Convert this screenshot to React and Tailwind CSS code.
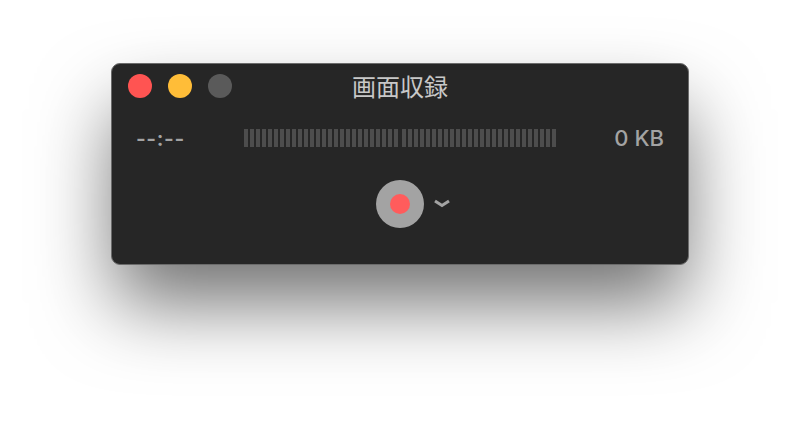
import React from 'react';

const bars = Array.from({ length: 26 });

function MeterGroup() {
  return (
    <div className="flex gap-[2px]">
      {bars.map((_, i) => (
        <div key={i} className="w-[4px] h-[18px] bg-[#4d4d4d]" />
      ))}
    </div>
  );
}

export default function App() {
  return (
    <div className="w-[800px] h-[424px] overflow-hidden bg-white flex justify-center pt-[63px] font-['Inter',sans-serif]">
      <div className="w-[578px] h-[202px] rounded-[9px] bg-[#262626] border border-[#6b6b6b] shadow-[0_42px_78px_-4px_rgba(0,0,0,0.56)] flex flex-col">
        <div className="relative flex items-center justify-center h-[44px] shrink-0">
          <div className="absolute left-[16px] top-[10px] flex gap-[16px]">
            <div className="w-[24px] h-[24px] rounded-full bg-[#ff5452]" />
            <div className="w-[24px] h-[24px] rounded-full bg-[#ffbd38]" />
            <div className="w-[24px] h-[24px] rounded-full bg-[#5a5a5a]" />
          </div>
          <span className="text-[24px] leading-none text-[#c8c8c8] font-['Noto_Sans_CJK_JP',sans-serif]">画面収録</span>
        </div>

        <div className="flex items-center h-[18px] mt-[21px] pl-[24px] pr-[24px]">
          <span className="w-[108px] text-[21px] leading-none font-semibold tracking-[0.6px] text-[#a3a3a3]">--:--</span>
          <div className="flex gap-[4px]">
            <MeterGroup />
            <MeterGroup />
          </div>
          <span className="ml-auto text-[22px] leading-none font-medium text-[#a3a3a3]">0 KB</span>
        </div>

        <div className="relative flex justify-center mt-[33px]">
          <div className="w-[48px] h-[48px] rounded-full bg-[#a3a3a3] flex items-center justify-center">
            <div className="w-[20px] h-[20px] rounded-full bg-[#ff5c5c]" />
          </div>
          <svg className="absolute left-[321px] top-[19px]" width="18" height="10" viewBox="0 0 18 10" fill="none">
            <path d="M2 2 L9 6.5 L16 2" stroke="#a3a3a3" strokeWidth="3" />
          </svg>
        </div>
      </div>
    </div>
  );
}
